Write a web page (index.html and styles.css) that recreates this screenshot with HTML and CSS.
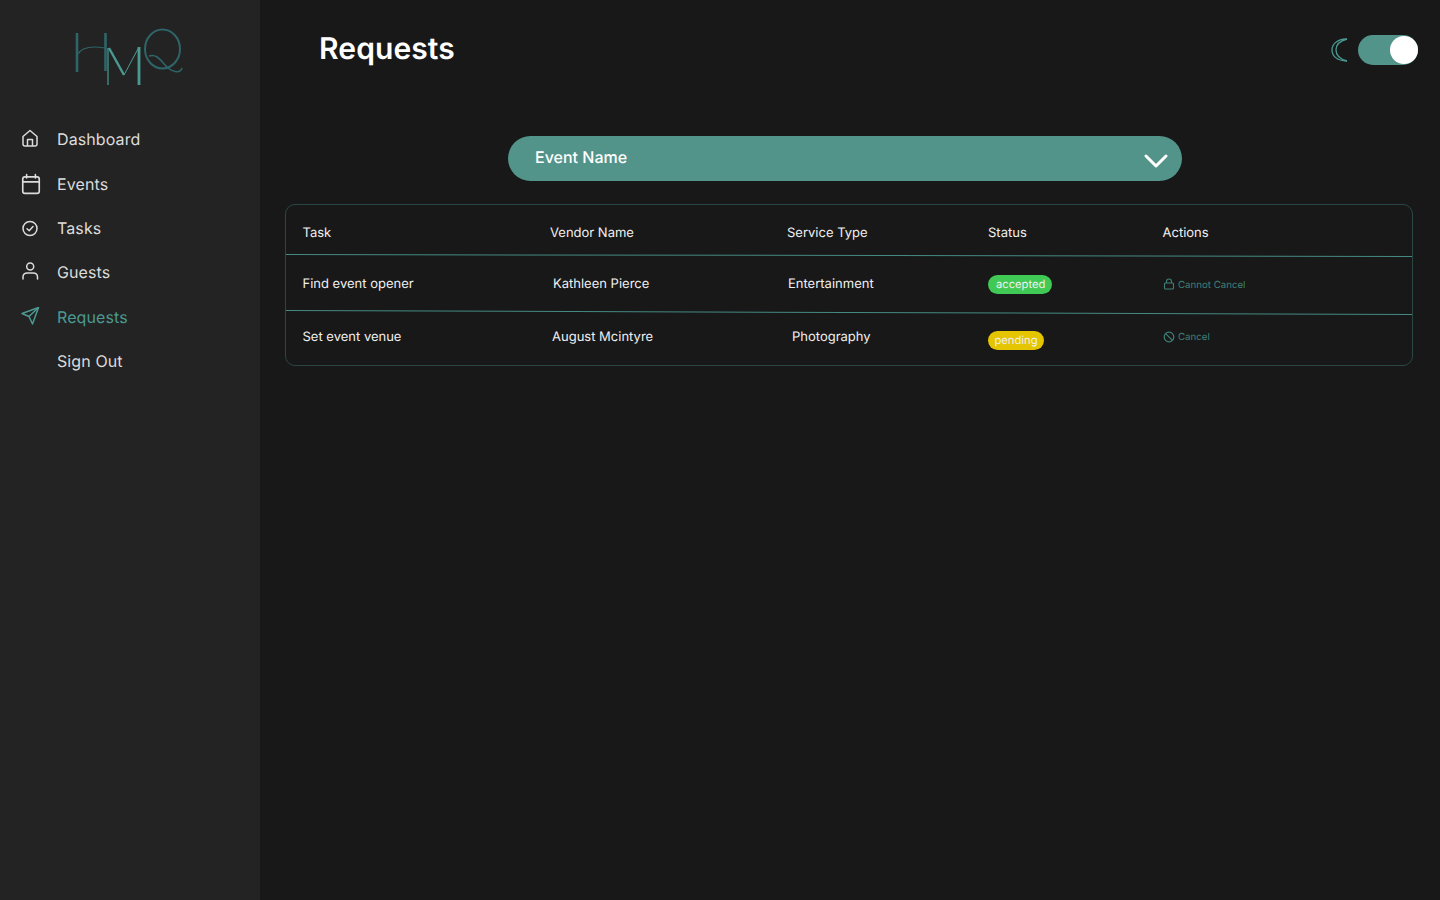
FILE: index.html
```html
<!DOCTYPE html>
<html lang="en">
<head>
    <meta charset="UTF-8">
    <meta name="viewport" content="width=device-width, initial-scale=1.0">
    <title>Requests</title>
    <link rel="stylesheet" href="styles.css">
</head>
<body>
    <aside class="sidebar">
        <svg class="logo" width="112" height="60" viewBox="0 0 112 60" fill="none" role="img" aria-label="HMQ">
            <g stroke="#2f6468">
                <path d="M4 6V45" stroke-width="2.600"/>
                <path d="M32.500 6V44" stroke-width="2.600"/>
                <path d="M5 27C9 20 20 19 32 21" stroke-width="1.200"/>
                <ellipse cx="89.500" cy="22" rx="17.500" ry="19.500" stroke-width="2"/>
                <path d="M76 29C85 26 89 36 95 41C100 45 107 47 109 41" stroke-width="1.600"/>
            </g>
            <g stroke="#4b9a92">
                <path d="M35 21V58" stroke-width="1.200"/>
                <path d="M36 21L51 48" stroke-width="2.400"/>
                <path d="M51 48L66 20" stroke-width="1"/>
                <path d="M66 20V58" stroke-width="2.800"/>
            </g>
        </svg>
        <nav class="nav">
            <a class="nav-item">
                <svg class="nav-icon" width="20" height="20" viewBox="0 0 20 20" fill="none" stroke="currentColor" stroke-width="1.500" stroke-linejoin="round">
                    <path d="M3 7.500L10 1.500L17 7.500V15C17 16.100 16.100 17 15 17H5C3.900 17 3 16.100 3 15Z"/>
                    <path d="M7.500 17V10.500H12.500V17"/>
                </svg>
                Dashboard
            </a>
            <a class="nav-item">
                <svg class="nav-icon nav-icon-wide" width="20" height="20" viewBox="0 0 20 20" fill="none" stroke="currentColor" stroke-width="1.500" stroke-linecap="round">
                    <rect x="2.500" y="3.500" width="15" height="15" rx="2"/>
                    <path d="M2.500 8H17.500M6 1.500V4.500M14 1.500V4.500"/>
                </svg>
                Events
            </a>
            <a class="nav-item">
                <svg class="nav-icon" width="20" height="20" viewBox="0 0 20 20" fill="none" stroke="currentColor" stroke-width="1.500" stroke-linecap="round" stroke-linejoin="round">
                    <circle cx="10" cy="10.500" r="7"/>
                    <path d="M7 10.800L9.200 12.800L13 8.500"/>
                </svg>
                Tasks
            </a>
            <a class="nav-item">
                <svg class="nav-icon" width="20" height="20" viewBox="0 0 20 20" fill="none" stroke="currentColor" stroke-width="1.500" stroke-linecap="round">
                    <circle cx="10.200" cy="4.500" r="3.500"/>
                    <path d="M3 17V15C3 12.500 5 11 7.500 11H13C15.500 11 17.500 12.500 17.500 15V17"/>
                </svg>
                Guests
            </a>
            <a class="nav-item nav-item-active">
                <svg class="nav-icon" width="20" height="20" viewBox="0 0 20 20" fill="none" stroke="currentColor" stroke-width="1.500" stroke-linejoin="round">
                    <path d="M18.500 0.500L2 6.500L9 9.500L12.500 17Z"/>
                    <path d="M18.500 0.500L9 9.500"/>
                </svg>
                Requests
            </a>
            <a class="nav-item">
                <span class="nav-icon"></span>
                Sign Out
            </a>
        </nav>
    </aside>

    <main class="main">
        <header class="topbar">
            <h1 class="title">Requests</h1>
            <div class="theme-switch">
                <svg width="18" height="24" viewBox="0 0 18 24" fill="none" stroke="#4b9a92" stroke-width="1.300">
                    <path d="M16 1C5 1 1 7 1 12C1 17 5 23 16 23"/>
                    <path d="M16 1C8.500 3 5 7.500 5 12C5 16.500 8.500 21 16 23"/>
                </svg>
                <span class="toggle"><span class="toggle-knob"></span></span>
            </div>
        </header>

        <div class="event-select">
            <span>Event Name</span>
            <svg width="24" height="14" viewBox="0 0 24 14" fill="none" stroke="#fff" stroke-width="3" stroke-linecap="round" stroke-linejoin="round">
                <path d="M2 2L12 12L22 2"/>
            </svg>
        </div>

        <section class="card">
            <div class="row row-head">
                <div class="cell">Task</div>
                <div class="cell">Vendor Name</div>
                <div class="cell">Service Type</div>
                <div class="cell">Status</div>
                <div class="cell">Actions</div>
            </div>
            <div class="rule rule-one"></div>
            <div class="row row-first">
                <div class="cell">Find event opener</div>
                <div class="cell nudge-3">Kathleen Pierce</div>
                <div class="cell nudge-1">Entertainment</div>
                <div class="cell"><span class="badge badge-accepted">accepted</span></div>
                <div class="cell action">
                    <svg width="12" height="12" viewBox="0 0 12 12" fill="none" stroke="currentColor" stroke-width="1.100">
                        <rect x="1.500" y="5" width="9" height="6" rx="1"/>
                        <path d="M3.500 5V3.500C3.500 2 4.500 1 6 1C7.500 1 8.500 2 8.500 3.500V5"/>
                    </svg>
                    <span>Cannot Cancel</span>
                </div>
            </div>
            <div class="rule rule-two"></div>
            <div class="row row-second">
                <div class="cell">Set event venue</div>
                <div class="cell nudge-2">August Mcintyre</div>
                <div class="cell nudge-5">Photography</div>
                <div class="cell"><span class="badge badge-pending">pending</span></div>
                <div class="cell action">
                    <svg width="12" height="12" viewBox="0 0 12 12" fill="none" stroke="currentColor" stroke-width="1.200">
                        <circle cx="6" cy="6" r="4.800"/>
                        <path d="M2.600 2.600L9.400 9.400"/>
                    </svg>
                    <span>Cancel</span>
                </div>
            </div>
        </section>
    </main>
</body>
</html>
```

FILE: styles.css
```css
* {
    box-sizing: border-box;
}
body {
    margin: 0;
    height: 900px;
    overflow: hidden;
    display: flex;
    background: #181818;
    color: #fff;
    font-family: Inter, "Liberation Sans", sans-serif;
    text-rendering: geometricPrecision;
}
.sidebar {
    width: 260px;
    flex-shrink: 0;
    background: #232323;
    padding-top: 27px;
}
.logo {
    display: block;
    margin-left: 73px;
}
.nav {
    display: flex;
    flex-direction: column;
    margin-top: 30px;
}
.nav-item {
    height: 44.4px;
    display: flex;
    align-items: center;
    gap: 17px;
    padding-left: 20px;
    font-size: 16px;
    letter-spacing: 0.1px;
    color: #dcdcdc;
}
.nav-item-active {
    color: #4b9a92;
}
.nav-icon {
    width: 20px;
    height: 20px;
    flex-shrink: 0;
}
.nav-icon-wide {
    width: 22px;
    height: 22px;
    margin-right: -2px;
}
.main {
    flex: 1;
    padding: 0 27px 0 25px;
}
.topbar {
    height: 100px;
    display: flex;
    justify-content: space-between;
    align-items: flex-start;
}
.title {
    margin: 31px 0 0 34px;
    font-size: 30px;
    line-height: 36px;
    letter-spacing: 0.1px;
    font-weight: 600;
}
.theme-switch {
    display: flex;
    align-items: center;
    gap: 9px;
    margin: 35px -5px 0 0;
}
.toggle {
    width: 60px;
    height: 30px;
    border-radius: 15px;
    background: #53948a;
    display: flex;
    justify-content: flex-end;
    align-items: center;
}
.toggle-knob {
    width: 28px;
    height: 28px;
    border-radius: 50%;
    background: #fff;
}
.event-select {
    width: 674px;
    height: 45px;
    margin: 36px 0 23px 223px;
    padding: 0 14px 0 27px;
    border-radius: 23px;
    background: #53948a;
    display: flex;
    justify-content: space-between;
    align-items: center;
    font-size: 16px;
    font-weight: 500;
}
.event-select span {
    margin-top: -3px;
}
.event-select svg {
    margin-top: 5px;
}
.card {
    height: 162px;
    border: 1.500px solid #2a4744;
    border-radius: 10px;
}
.row {
    display: grid;
    grid-template-columns: 247.500px 237px 201px 174.500px 1fr;
    padding-left: 16.500px;
    font-size: 13px;
    color: #f0f0f0;
    align-items: center;
}
.row-head {
    height: 50px;
    padding-top: 6px;
}
.row-first {
    height: 55.500px;
    padding-top: 1px;
}
.row-second {
    height: 46px;
    padding-top: 1.500px;
}
.nudge-1 {
    padding-left: 1px;
}
.nudge-2 {
    padding-left: 2px;
}
.nudge-3 {
    padding-left: 3px;
}
.nudge-5 {
    padding-left: 5px;
}
.rule {
    height: 1.200px;
    background: #458a82;
}
.rule-one {
    transform: rotate(0.1deg);
}
.rule-two {
    transform: rotate(0.2deg);
}
.badge {
    display: inline-block;
    height: 19px;
    line-height: 18px;
    border-radius: 10px;
    font-size: 11.200px;
    padding: 0 6.500px;
}
.badge-accepted {
    background: #41c955;
    padding: 0 7px 0 8px;
}
.badge-pending {
    background: #e5c400;
    position: relative;
    top: 4px;
}
.action {
    display: flex;
    align-items: center;
    gap: 3.500px;
    font-size: 9.700px;
    color: #3f8077;
}
.action span {
    margin-top: 2px;
}
```
